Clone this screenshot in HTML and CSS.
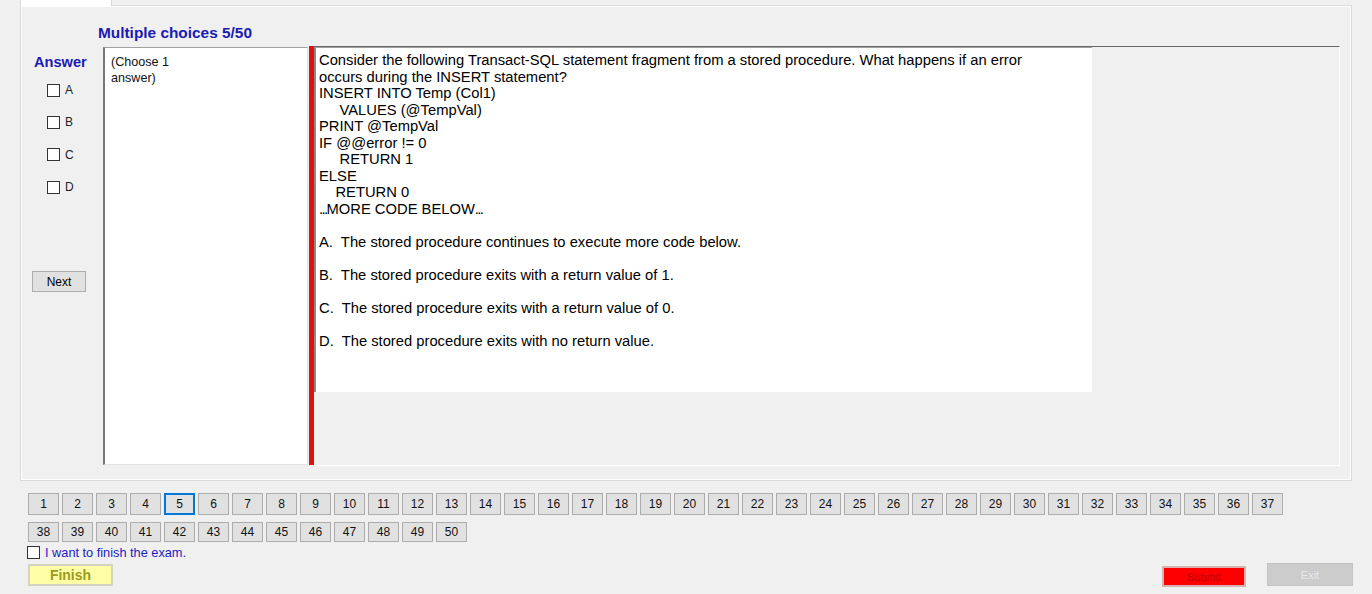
FILE: index.html
```html
<!DOCTYPE html>
<html>
<head>
<meta charset="utf-8">
<link rel="stylesheet" href="styles.css">
</head>
<body>
<div class="tabstrip"><div class="tab"></div></div>
<div class="tabpage">
  <div class="title">Multiple choices 5/50</div>
  <div class="main">
    <div class="answer-col">
      <div class="answer-label">Answer</div>
      <div class="opt"><span class="cb"></span><span>A</span></div>
      <div class="opt"><span class="cb"></span><span>B</span></div>
      <div class="opt"><span class="cb"></span><span>C</span></div>
      <div class="opt"><span class="cb"></span><span>D</span></div>
      <div class="btn next">Next</div>
    </div>
    <div class="choose">(Choose 1<br>answer)</div>
    <div class="redbar"></div>
    <div class="qpanel">
      <div class="qtext">Consider the following Transact-SQL statement fragment from a stored procedure. What happens if an error
occurs during the INSERT statement?
INSERT INTO Temp (Col1)
     VALUES (@TempVal)
PRINT @TempVal
IF @@error != 0
     RETURN 1
ELSE
    RETURN 0
<span class="dots">...</span>MORE CODE BELOW<span class="dots">...</span>

A.  The stored procedure continues to execute more code below.

B.  The stored procedure exits with a return value of 1.

C.  The stored procedure exits with a return value of 0.

D.  The stored procedure exits with no return value.</div>
    </div>
  </div>
</div>
<div class="nav">
  <div class="navrow">
    <div class="nb">1</div><div class="nb">2</div><div class="nb">3</div><div class="nb">4</div><div class="nb sel">5</div><div class="nb">6</div><div class="nb">7</div><div class="nb">8</div><div class="nb">9</div><div class="nb">10</div><div class="nb">11</div><div class="nb">12</div><div class="nb">13</div><div class="nb">14</div><div class="nb">15</div><div class="nb">16</div><div class="nb">17</div><div class="nb">18</div><div class="nb">19</div><div class="nb">20</div><div class="nb">21</div><div class="nb">22</div><div class="nb">23</div><div class="nb">24</div><div class="nb">25</div><div class="nb">26</div><div class="nb">27</div><div class="nb">28</div><div class="nb">29</div><div class="nb">30</div><div class="nb">31</div><div class="nb">32</div><div class="nb">33</div><div class="nb">34</div><div class="nb">35</div><div class="nb">36</div><div class="nb">37</div>
  </div>
  <div class="navrow row2">
    <div class="nb">38</div><div class="nb">39</div><div class="nb">40</div><div class="nb">41</div><div class="nb">42</div><div class="nb">43</div><div class="nb">44</div><div class="nb">45</div><div class="nb">46</div><div class="nb">47</div><div class="nb">48</div><div class="nb">49</div><div class="nb">50</div>
  </div>
</div>
<div class="bottom">
  <div class="left">
    <div class="finish-check"><span class="cb"></span><span>I want to finish the exam.</span></div>
    <div class="finish">Finish</div>
  </div>
  <div class="right">
    <div class="submit">Submit</div>
    <div class="exit">Exit</div>
  </div>
</div>
</body>
</html>
```
FILE: styles.css
```css
* { box-sizing: border-box; }
html, body { margin: 0; padding: 0; }
body {
  width: 1372px;
  height: 594px;
  overflow: hidden;
  background: #f0f0f0;
  font-family: "Liberation Sans", Arial, sans-serif;
  color: #000;
}
.tabstrip {
  height: 5px;
  padding-left: 20px;
}
.tab {
  width: 92px;
  height: 6px;
  background: #ffffff;
  border-left: 1px solid #d9d9d9;
  border-right: 1px solid #d9d9d9;
  position: relative;
  z-index: 1;
}
.tabpage {
  margin-left: 20px;
  width: 1332px;
  height: 476px;
  border: 1px solid #dadada;
  box-shadow: inset 1px 1px 0 #ffffff, inset -1px -1px 0 #ffffff;
  background: #f0f0f0;
}
.title {
  margin-top: 18px;
  padding-left: 77px;
  height: 18px;
  line-height: 18px;
  font-size: 15.4px;
  font-weight: bold;
  color: #1a1ab4;
}
.main {
  margin-top: 4px;
  display: flex;
  align-items: flex-start;
  height: 420px;
}
.answer-col {
  width: 82px;
  padding-top: 7px;
  display: flex;
  flex-direction: column;
}
.answer-label {
  padding-left: 13px;
  height: 18px;
  line-height: 18px;
  font-size: 14.6px;
  font-weight: bold;
  color: #1a1ab4;
  margin-bottom: 3px;
}
.opt {
  height: 32.3px;
  display: flex;
  align-items: center;
  padding-left: 26px;
  font-size: 12px;
  color: #222;
}
.cb {
  display: inline-block;
  width: 13px;
  height: 13px;
  border: 1px solid #333;
  background: #fff;
  margin-right: 5px;
  flex: none;
}
.btn {
  background: #e1e1e1;
  border: 1px solid #adadad;
  font-size: 12px;
  display: flex;
  align-items: center;
  justify-content: center;
}
.next {
  margin-top: 68px;
  margin-left: 11px;
  width: 54px;
  height: 21px;
}
.choose {
  margin-top: 1px;
  width: 205px;
  height: 418px;
  background: #fff;
  border-top: 1px solid #a0a0a0;
  border-left: 2px solid #777;
  border-right: 1px solid #e3e3e3;
  border-bottom: 1px solid #e3e3e3;
  padding: 6px 6px;
  font-size: 12.6px;
  line-height: 16px;
  color: #111;
}
.redbar {
  margin-left: 1px;
  width: 5px;
  height: 419px;
  background: #e01010;
}
.qpanel {
  width: 1026px;
  height: 420px;
  border-top: 1px solid #696969;
  border-right: 1px solid #ffffff;
  border-bottom: 1px solid #ffffff;
}
.qtext {
  width: 778px;
  height: 345px;
  background: #fff;
  border-top: 1px solid #a0a0a0;
  border-left: 2px solid #8a8a8a;
  padding: 4px 3px;
  white-space: pre;
  font-size: 14.75px;
  line-height: 16.5px;
  color: #000;
}
.dots {
  letter-spacing: -1.6px;
}
.nav {
  margin-top: 12px;
  padding-left: 28px;
  display: flex;
  flex-direction: column;
  gap: 7px;
}
.navrow {
  display: flex;
  gap: 3px;
}
.nb {
  width: 31px;
  height: 22px;
  background: #e1e1e1;
  border: 1px solid #adadad;
  font-size: 12px;
  display: flex;
  align-items: center;
  justify-content: center;
  color: #111;
}
.row2 .nb { height: 20px; }
.nb.sel {
  border: 2px solid #0078d7;
}
.bottom {
  margin-top: 3px;
  padding-left: 27px;
  padding-right: 19px;
  display: flex;
  justify-content: space-between;
  align-items: flex-end;
}
.finish-check {
  display: flex;
  align-items: center;
  height: 14px;
  font-size: 12.75px;
  color: #2020c0;
}
.finish-check .cb { margin-right: 5px; }
.finish {
  margin-top: 5px;
  margin-left: 1px;
  width: 85px;
  height: 22px;
  background: #ffffa8;
  border: 2px solid #d4d4c0;
  font-size: 14px;
  font-weight: bold;
  color: #9c9c1c;
  display: flex;
  align-items: center;
  justify-content: center;
}
.right {
  display: flex;
  gap: 21px;
  align-items: flex-end;
}
.submit {
  width: 84px;
  height: 21px;
  margin-bottom: -1px;
  background: #ff0000;
  border: 2px solid #d8b0b0;
  font-size: 11px;
  color: #b00000;
  display: flex;
  align-items: center;
  justify-content: center;
}
.exit {
  width: 86px;
  height: 23px;
  background: #cccccc;
  border: 1px solid #c4c4c4;
  font-size: 11px;
  color: #e8e8e8;
  display: flex;
  align-items: center;
  justify-content: center;
}
```
